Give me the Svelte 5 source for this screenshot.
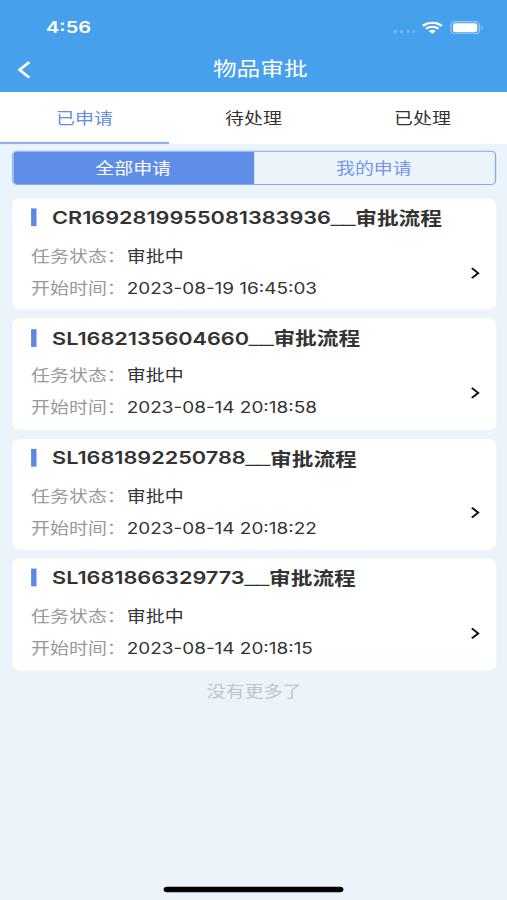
<script>
	const tabs = ['已申请', '待处理', '已处理'];
	const segments = ['全部申请', '我的申请'];

	let activeTab = 0;
	let activeSegment = 0;

	const tasks = [
		{ code: 'CR1692819955081383936', status: '审批中', start: '2023-08-19 16:45:03' },
		{ code: 'SL1682135604660', status: '审批中', start: '2023-08-14 20:18:58' },
		{ code: 'SL1681892250788', status: '审批中', start: '2023-08-14 20:18:22' },
		{ code: 'SL1681866329773', status: '审批中', start: '2023-08-14 20:18:15' }
	];
</script>

<div class="viewport">
	<div class="screen">
		<header>
			<div class="status-bar">
				<span class="clock">4:56</span>
				<div class="status-icons">
					<span class="signal"><i></i><i></i><i></i><i></i></span>
					<svg class="wifi" viewBox="0 0 16 12" width="15.5" height="12">
						<path d="M.8 4.3a10.3 10.3 0 0 1 14.4 0M3.3 7a6.8 6.8 0 0 1 9.4 0" />
						<path class="fill" d="M5.4 9.1a3.8 3.8 0 0 1 5.2 0L8 11.8z" />
					</svg>
					<svg class="battery" viewBox="0 0 25 12" width="25" height="12">
						<rect class="shell" x=".5" y=".5" width="21" height="11" rx="3" />
						<rect class="level" x="2" y="2" width="18" height="8" rx="1.6" />
						<path class="level tip" d="M23 4v4c1.3-.6 1.3-3.4 0-4z" />
					</svg>
				</div>
			</div>
			<div class="nav">
				<button class="back" aria-label="返回">
					<svg viewBox="0 0 10 16" width="10" height="16"><path d="M8.7 1 1.5 8l7.2 7" /></svg>
				</button>
				<h1>物品审批</h1>
			</div>
		</header>

		<nav class="tabs">
			{#each tabs as tab, i}
				<button class:active={activeTab === i} on:click={() => (activeTab = i)}>{tab}</button>
			{/each}
		</nav>

		<main>
			<div class="segments">
				{#each segments as segment, i}
					<button class:active={activeSegment === i} on:click={() => (activeSegment = i)}>
						{segment}
					</button>
				{/each}
			</div>

			{#each tasks as task}
				<article class="card">
					<div class="info">
						<h2><span>{task.code}</span><span class="joint">__</span><span class="flow">审批流程</span></h2>
						<p><span class="label">任务状态：</span>{task.status}</p>
						<p><span class="label">开始时间：</span>{task.start}</p>
					</div>
					<svg class="arrow" viewBox="0 0 7 11" width="7" height="11"><path d="M1 1l4.7 4.5L1 10" /></svg>
				</article>
			{/each}

			<p class="end">没有更多了</p>
		</main>

		<div class="home-bar"></div>
	</div>
</div>

<style>
	:global(body) {
		background: #ecf4fb;
	}

	.viewport {
		width: 507px;
		height: 900px;
		overflow: hidden;
	}

	/* 375x812 layout stretched over the full window */
	.screen {
		display: flex;
		flex-direction: column;
		width: 375px;
		height: 812px;
		transform: scale(1.352, 1.10837);
		transform-origin: 0 0;
		background: #ecf4fb;
		color: #333;
		font-family: Inter, 'Noto Sans CJK SC', sans-serif;
		font-size: 14px;
	}

	button {
		padding: 0;
		border: 0;
		background: none;
		color: inherit;
		font: inherit;
	}

	svg {
		fill: none;
	}

	h1,
	h2,
	p {
		margin: 0;
		font-weight: 400;
	}

	header {
		height: 82.5px;
		background: #46a0eb;
		color: #fff;
	}

	.status-bar {
		display: flex;
		align-items: center;
		justify-content: space-between;
		height: 44px;
		padding: 5px 17.2px 0 34px;
		box-sizing: border-box;
	}

	.clock {
		padding-top: 1px;
		font-size: 14.8px;
		font-weight: 600;
	}

	.status-icons {
		display: flex;
		align-items: center;
		gap: 5px;
	}

	.signal {
		display: flex;
		gap: 2.4px;
		padding-top: 8px;
	}

	.signal i {
		width: 2.2px;
		height: 2.5px;
		border-radius: 1px;
		background: rgba(255, 255, 255, 0.25);
	}

	.wifi path {
		stroke: #fff;
		stroke-width: 2;
	}

	.wifi .fill {
		fill: #fff;
		stroke: none;
	}

	.battery .shell {
		stroke: rgba(255, 255, 255, 0.45);
	}

	.battery .level {
		fill: #fff;
	}

	.battery .tip {
		opacity: 0.5;
	}

	.nav {
		display: grid;
		grid-template-columns: 40px 1fr 30px;
		align-items: center;
		height: 37px;
	}

	.back {
		display: flex;
		padding-left: 12.5px;
	}

	.back path {
		stroke: #fff;
		stroke-width: 2.3;
	}

	h1 {
		padding-top: 1.4px;
		font-size: 17.5px;
		line-height: 24px;
		text-align: center;
	}

	.tabs {
		display: flex;
		height: 47.5px;
		background: #fff;
	}

	.tabs button {
		flex: 1;
		padding-top: 1px;
		border-bottom: 2px solid transparent;
	}

	.tabs .active {
		border-bottom-color: #8faeea;
		color: #628de8;
	}

	main {
		flex: 1;
		padding: 6px 8px 0 9px;
	}

	.segments {
		display: flex;
		height: 31px;
		margin-bottom: 12px;
		border: 1px solid #86a8f0;
		border-radius: 4px;
		box-sizing: border-box;
		overflow: hidden;
		color: #7396e9;
	}

	.segments button {
		flex: 1;
		padding: 0 1px 2px 0;
	}

	.segments .active {
		background: #5f8de8;
		color: #fff;
	}

	.card {
		display: flex;
		align-items: center;
		justify-content: space-between;
		height: 100.4px;
		margin-bottom: 8px;
		padding: 0 12px 0 14px;
		border-radius: 6px;
		box-sizing: border-box;
		background: #fff;
	}

	h2 {
		display: flex;
		align-items: center;
		height: 24px;
		margin-bottom: 7.8px;
		font-size: 16.05px;
		font-weight: 600;
		white-space: nowrap;
	}

	h2::before {
		content: '';
		width: 4px;
		height: 16px;
		margin-right: 11.5px;
		background: #5b88e6;
	}

	/* Liberation underscores join into one line */
	.joint {
		font-family: 'Liberation Sans', sans-serif;
		font-size: 16.2px;
		-webkit-text-stroke: 0.5px currentColor;
	}

	.flow {
		position: relative;
		top: -0.5px;
	}

	.card p {
		line-height: 29px;
	}

	.label {
		margin-right: 0.8px;
		color: #999;
	}

	.arrow {
		margin-top: 34px;
	}

	.arrow path {
		stroke: #111;
		stroke-width: 1.6;
	}

	.end {
		color: #bfc5cb;
		line-height: 22px;
		text-align: center;
	}

	.home-bar {
		flex: none;
		width: 133px;
		height: 5px;
		margin: 0 auto 7.5px;
		border-radius: 3px;
		background: #000;
	}
</style>
